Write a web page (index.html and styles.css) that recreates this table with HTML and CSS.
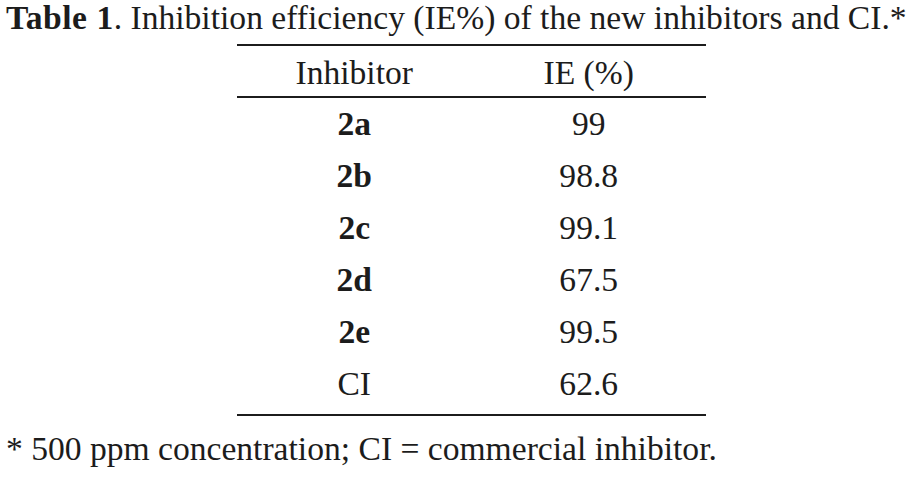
FILE: index.html
```html
<!DOCTYPE html>
<html lang="en">
<head>
<meta charset="utf-8">
<title>Table 1</title>
<link rel="stylesheet" href="styles.css">
</head>
<body>
<div class="page">
  <p class="caption"><b>Table 1</b>. Inhibition efficiency (IE%) of the new inhibitors and CI.*</p>
  <table class="data">
    <thead>
      <tr><th>Inhibitor</th><th>IE (%)</th></tr>
    </thead>
    <tbody>
      <tr><td><b>2a</b></td><td>99</td></tr>
      <tr><td><b>2b</b></td><td>98.8</td></tr>
      <tr><td><b>2c</b></td><td>99.1</td></tr>
      <tr><td><b>2d</b></td><td>67.5</td></tr>
      <tr><td><b>2e</b></td><td>99.5</td></tr>
      <tr class="last"><td>CI</td><td>62.6</td></tr>
    </tbody>
  </table>
  <p class="note">* 500 ppm concentration; CI = commercial inhibitor.</p>
</div>
</body>
</html>
```

FILE: styles.css
```css
html, body {
  margin: 0;
  padding: 0;
  background: #ffffff;
}

.page {
  font-family: "Liberation Serif", "Times New Roman", serif;
  font-size: 33.6px;
  line-height: 36px;
  color: #1c1c1c;
}

.caption {
  margin: 0;
  padding-left: 6px;
  white-space: nowrap;
}

.caption b {
  font-weight: 700;
  letter-spacing: 0.5px;
}

.data {
  margin: 8px 0 0 237px;
  width: 469px;
  border-collapse: collapse;
  border-top: 2px solid #1c1c1c;
  border-bottom: 2px solid #1c1c1c;
}

.data th,
.data td {
  width: 50%;
  padding: 0;
  text-align: center;
  font-weight: 400;
  white-space: nowrap;
}

.data thead tr {
  border-bottom: 2px solid #1c1c1c;
}

.data th {
  padding: 9px 0 5px;
}

.data td {
  padding: 8px 0;
}

.data .last td {
  padding-bottom: 12px;
}

.data b {
  font-weight: 700;
}

.note {
  margin: 15px 0 0;
  padding-left: 6px;
  white-space: nowrap;
}
```
